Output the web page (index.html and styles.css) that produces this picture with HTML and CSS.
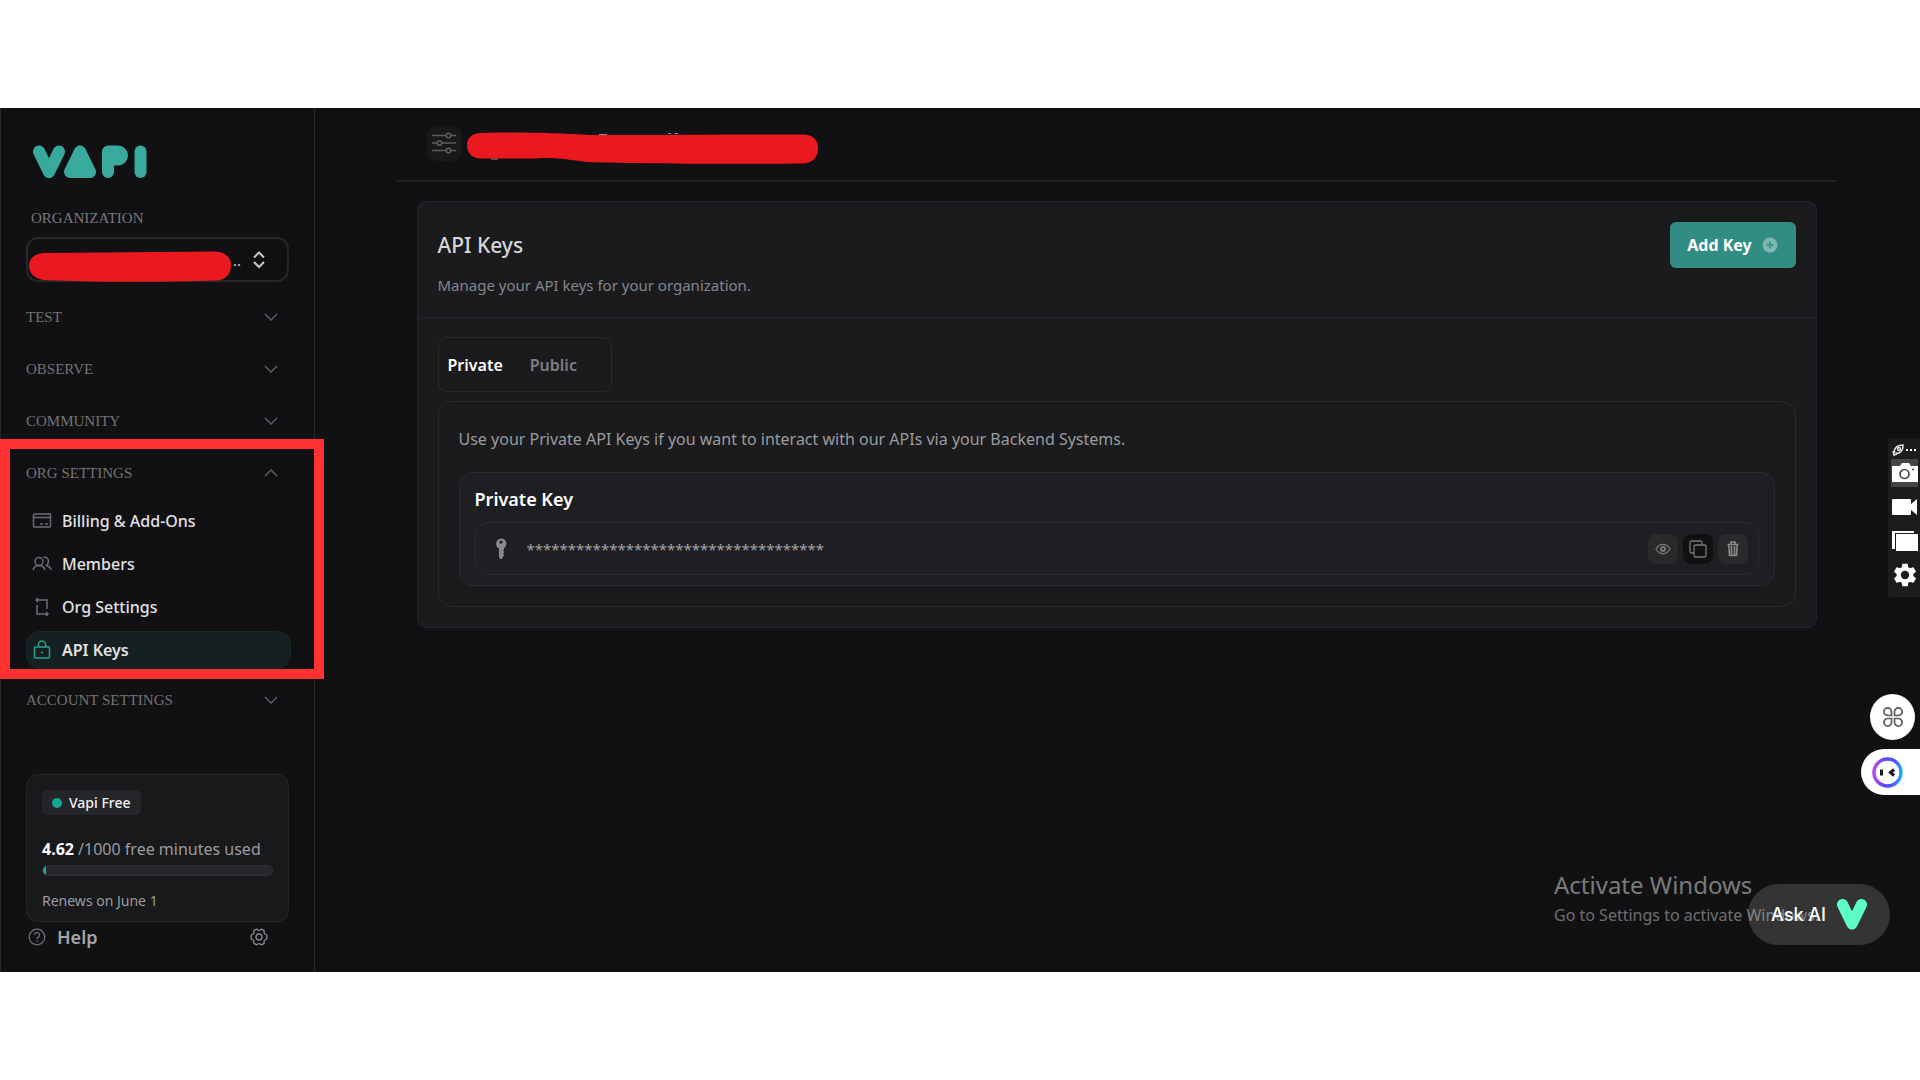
FILE: index.html
```html
<!DOCTYPE html>
<html lang="en">
<head>
<meta charset="utf-8">
<title>API Keys - Vapi</title>
<link rel="stylesheet" href="styles.css">
</head>
<body>
<div class="app">
  <aside class="sidebar">
    <a class="logo" href="#" aria-label="Vapi">
      <svg width="114" height="34" viewBox="0 0 114 34" fill="none" stroke="#38aa9d" stroke-width="12" stroke-linecap="round" stroke-linejoin="round">
        <path d="M6 6.500L16 27L26 6.500"/>
        <path d="M47 6.500L57 27H37Z" fill="#38aa9d"/>
        <path d="M75 0.500h10a10 10 0 0 1 0 20h-4v6.500a6 6 0 0 1-12 0V6.500a6 6 0 0 1 6-6Z" fill="#38aa9d" stroke="none"/>
        <path d="M107.500 6.500V27"/>
      </svg>
    </a>
    <label class="org-label" for="org">ORGANIZATION</label>
    <div class="org-select">
      <select id="org"><option>..</option></select>
      <svg class="org-chevrons" width="12" height="18" viewBox="0 0 12 18" fill="none" stroke="#c9c9cc" stroke-width="2"><path d="M1 6.500L6 1.500L11 6.500M1 11L6 16L11 11"/></svg>
      <svg class="org-redaction" width="203" height="32" viewBox="0 0 203 32"><path d="M14 2L187 0.500C197 1 203 8 202 16C201 24 196 29 188 29.500C130 31 70 31.500 14 29C5 27 0 22 0 15C0 8 5 3 14 2Z" fill="#ea191f"/></svg>
    </div>
    <nav class="nav">
      <button class="section" type="button">TEST<svg class="chev" viewBox="0 0 14 8"><path d="M1 1l6 6 6-6"/></svg></button>
      <button class="section" type="button">OBSERVE<svg class="chev" viewBox="0 0 14 8"><path d="M1 1l6 6 6-6"/></svg></button>
      <button class="section" type="button">COMMUNITY<svg class="chev" viewBox="0 0 14 8"><path d="M1 1l6 6 6-6"/></svg></button>
      <button class="section" type="button" aria-expanded="true">ORG SETTINGS<svg class="chev" viewBox="0 0 14 8"><path d="M1 7l6-6 6 6"/></svg></button>
      <ul class="items">
        <li><a class="item" href="#"><svg class="item-icon" viewBox="0 0 20 20"><rect x="1.500" y="3" width="17" height="13" rx="1"/><path d="M1.500 6.500h17M8 13h3M13 13h3"/></svg>Billing &amp; Add-Ons</a></li>
        <li><a class="item" href="#"><svg class="item-icon" viewBox="0 0 20 20"><circle cx="7" cy="7.500" r="4"/><path d="M1 16c1-3 3.500-4.500 6-4.500s5 1.500 6 4.500M11.500 3.500c3-1 5 1 5 4 0 1.500-1 3-2 4 2 .500 4 2 5 4.500"/></svg>Members</a></li>
        <li><a class="item" href="#"><svg class="item-icon" viewBox="0 0 20 20"><path d="M4 3h11v9M6 1L4 3l2 2M16 17H5V8M14 15l2 2-2 2"/></svg>Org Settings</a></li>
        <li><a class="item active" href="#"><svg class="item-icon" viewBox="0 0 20 20"><rect x="2.500" y="7" width="15" height="11" rx="1"/><path d="M6.500 7V4.500a3.500 3.500 0 0 1 7 0V7M9 12.500h2"/></svg>API Keys</a></li>
      </ul>
      <button class="section" type="button">ACCOUNT SETTINGS<svg class="chev" viewBox="0 0 14 8"><path d="M1 1l6 6 6-6"/></svg></button>
    </nav>
    <section class="plan">
      <span class="plan-badge"><i class="dot"></i>Vapi Free</span>
      <p class="usage"><strong>4.62</strong> /1000 free minutes used</p>
      <div class="meter" role="progressbar" aria-label="Free minutes" aria-valuenow="4.62" aria-valuemax="1000"><i class="meter-fill"></i></div>
      <p class="renews">Renews on June 1</p>
    </section>
    <footer class="help-row">
      <a class="help" href="#"><svg width="18" height="18" viewBox="0 0 18 18" fill="none" stroke="#6c6e74" stroke-width="1.300"><circle cx="9" cy="9" r="7.800"/><path d="M6.500 7a2.500 2.500 0 1 1 3.800 2.100c-.9.500-1.300.9-1.300 1.900M9 12.300v1.500"/></svg>Help</a>
      <button class="gear" type="button" aria-label="Settings"><svg width="18" height="18" viewBox="0 0 18 18" fill="none" stroke="#85878c" stroke-width="1.400"><circle cx="9" cy="9" r="3"/><path d="M6.500 1.200L9 2.500l2.500-1.300 2.600 1.500.1 2.800L16.800 7v4l-2.600 1.500-.1 2.800-2.600 1.500L9 15.500l-2.500 1.300-2.600-1.500-.1-2.800L1.200 11V7l2.600-1.500.1-2.800Z" stroke-linejoin="round"/></svg></button>
    </footer>
  </aside>

  <main class="main">
    <div class="content">
      <header class="topbar">
        <button class="menu-btn" type="button" aria-label="Menu"><svg width="26" height="22" viewBox="0 0 26 22" fill="none" stroke="#5b5c5e" stroke-width="1.600"><path d="M1 3.500h14M20 3.500h5M1 11h5M11 11h14M1 18.500h14M20 18.500h5"/><circle cx="17.500" cy="3.500" r="2.300"/><circle cx="8.500" cy="11" r="2.300"/><circle cx="17.500" cy="18.500" r="2.300"/></svg></button>
        <svg class="title-redaction" width="352" height="33" viewBox="0 0 352 33"><path d="M132 2.500h8M201 1.500h3M208 1.500h3M24 27h7" stroke="#8e8e90" stroke-width="1"/><path d="M14 1C50 0 90 1 122 3C190 3.500 250 2 337 2.500C347 3 351 9 351 16C351 25 346 31 336 31.500C270 32 180 32 120 30C100 28 90 25 70 26.500L13 26.500C4 26 0 20 0 13C0 6 5 1 14 1Z" fill="#ea191f"/></svg>
      </header>
      <section class="card">
        <div class="card-head">
          <div>
            <h1>API Keys</h1>
            <p class="sub">Manage your API keys for your organization.</p>
          </div>
          <button class="add" type="button">Add Key<svg width="16" height="16" viewBox="0 0 16 16"><circle cx="8" cy="8" r="7.500" fill="#80b7af"/><path d="M8 4.500v7M4.500 8h7" stroke="#318d83" stroke-width="1.400"/></svg></button>
        </div>
        <div class="card-body">
          <div class="tabs" role="tablist">
            <button class="tab selected" role="tab" aria-selected="true" type="button">Private</button>
            <button class="tab" role="tab" aria-selected="false" type="button">Public</button>
          </div>
          <div class="panel" role="tabpanel">
            <p class="intro">Use your Private API Keys if you want to interact with our APIs via your Backend Systems.</p>
            <div class="key-box">
              <label class="key-title" for="key">Private Key</label>
              <div class="key-row">
                <svg class="key-icon" width="12" height="22" viewBox="0 0 12 22"><path fill-rule="evenodd" d="M6 0.500a5.300 5.300 0 0 1 3 9.700v1.300l-1 1 1 1.200v1l-1 1 1 1.300v1L8 18v1.500L6 21.500 4 19.500V10.500A5.300 5.300 0 0 1 6 .5ZM6 2.500a1.600 1.600 0 1 0 0 3.200 1.600 1.600 0 0 0 0-3.200Z" fill="#88898b"/></svg>
                <input class="key-value" id="key" type="text" readonly value="************************************">
                <button class="act" type="button" aria-label="Show"><svg width="16" height="12" viewBox="0 0 16 12" fill="none" stroke="#77787a" stroke-width="1.300"><path d="M1 6C4.500-.3 11.500-.3 15 6 11.500 12.300 4.500 12.300 1 6Z"/><circle cx="8" cy="6" r="2" stroke-width="2"/></svg></button>
                <button class="act dark" type="button" aria-label="Copy"><svg width="18" height="18" viewBox="0 0 18 18" fill="none" stroke="#77787a" stroke-width="1.300"><rect x="5" y="5" width="12" height="12" rx="1.500"/><path d="M5 13H2.500A1.500 1.500 0 0 1 1 11.500v-9A1.500 1.500 0 0 1 2.500 1h9A1.500 1.500 0 0 1 13 2.500V5"/></svg></button>
                <button class="act" type="button" aria-label="Delete"><svg width="12" height="16" viewBox="0 0 12 16" fill="none" stroke="#898a8c" stroke-width="1.600"><path d="M.5 3.500h11M4 3V1h4v2M1.800 3.500l.7 11h7l.7-11M4.500 5v9M7.500 5v9"/></svg></button>
              </div>
            </div>
          </div>
        </div>
      </section>
    </div>
  </main>

  <div class="highlight"></div>

  <div class="capture">
    <div class="capture-top">
      <svg width="12" height="12" viewBox="0 0 12 12" fill="none" stroke="#e8e8e8" stroke-width="1.500"><path d="M3 9C1 5 5 1 11 1c.5 5-3 9-7 8M1 7l1 4 3-1"/><circle cx="7" cy="5" r="1.500"/></svg>
      <svg width="12" height="4" viewBox="0 0 12 4" fill="#fff"><path d="M1 1h2v2H1zM5 1h2v2H5zM9 1h2v2H9z"/></svg>
    </div>
    <button class="cap on" type="button" aria-label="Screenshot"><svg width="26" height="20" viewBox="0 0 26 20"><path d="M0 3h8l2-3h7l2 3h7v16H0Z" fill="#fff"/><circle cx="12.500" cy="11" r="4.500" fill="none" stroke="#454545" stroke-width="1.700"/><circle cx="21" cy="6.500" r="1" fill="#454545"/></svg></button>
    <button class="cap" type="button" aria-label="Record"><svg width="26" height="18" viewBox="0 0 26 18"><path d="M1 1h17q1 0 1 1v4l6-5v16l-6-5v4q0 1-1 1H1q-1 0-1-1V2q0-1 1-1Z" fill="#fff"/></svg></button>
    <button class="cap" type="button" aria-label="Gallery"><svg width="26" height="22" viewBox="0 0 26 22" fill="#fff"><path d="M0 1h22v2H3v16H0Z"/><path d="M4 4h22v17H4Z"/></svg></button>
    <button class="cap" type="button" aria-label="Options"><svg width="28" height="28" viewBox="0 0 24 24"><path fill="#fff" d="M19.140 12.940c.04-.3.060-.61.060-.94 0-.32-.02-.64-.07-.94l2.030-1.580a.5.500 0 0 0 .12-.61l-1.920-3.320a.5.500 0 0 0-.59-.22l-2.390.96a7 7 0 0 0-1.620-.94l-.36-2.540A.5.500 0 0 0 13.920 2.400h-3.840a.5.500 0 0 0-.47.410l-.36 2.540c-.59.240-1.130.57-1.620.94l-2.390-.96a.5.500 0 0 0-.59.220L2.740 8.870a.5.500 0 0 0 .12.610l2.030 1.580a6 6 0 0 0 0 1.880l-2.030 1.580a.5.500 0 0 0-.12.610l1.920 3.320c.12.220.37.290.59.220l2.390-.96c.5.380 1.030.7 1.620.94l.36 2.540c.05.240.24.410.48.410h3.840c.24 0 .44-.17.470-.41l.36-2.540a7 7 0 0 0 1.620-.94l2.390.96c.22.080.47 0 .59-.22l1.920-3.320a.5.500 0 0 0-.12-.61ZM12 15.600a3.600 3.600 0 1 1 0-7.200 3.600 3.600 0 0 1 0 7.200Z"/></svg></button>
  </div>

  <button class="apps" type="button" aria-label="Apps"><svg width="20" height="20" viewBox="0 0 20 20" fill="none" stroke="#5b5b60" stroke-width="1.700"><path d="M8.500 8.500H4.800a3.800 3.800 0 1 1 3.700-3.700ZM11.500 8.500h3.700a3.800 3.800 0 1 0-3.700-3.700ZM8.500 11.500H4.800a3.800 3.800 0 1 0 3.700 3.700ZM11.500 11.500h3.700a3.800 3.800 0 1 1-3.700 3.700Z"/></svg></button>
  <button class="bot" type="button" aria-label="Assistant"><svg width="31" height="31" viewBox="0 0 31 31"><defs><linearGradient id="ring" x1="0" y1=".7" x2="1" y2=".8"><stop offset="0" stop-color="#b34be8"/><stop offset=".4" stop-color="#5848ff"/><stop offset=".75" stop-color="#4a5cff"/><stop offset="1" stop-color="#20b4ee"/></linearGradient></defs><circle cx="15.500" cy="15.500" r="13.500" fill="#fff" stroke="url(#ring)" stroke-width="3.500"/><path d="M9.500 12.500v6M22 12.500L18.500 15.500l3.500 3" fill="none" stroke="#1a1a1a" stroke-width="3"/></svg></button>

  <button class="ask" type="button">Ask AI<svg width="30" height="31" viewBox="0 0 30 31"><path d="M5.500 5.500L15 25L24.500 5.500" fill="none" stroke="#5dfeca" stroke-width="11" stroke-linecap="round" stroke-linejoin="round"/></svg></button>

  <div class="watermark">
    <p class="wm-title">Activate Windows</p>
    <p class="wm-text">Go to Settings to activate Windows.</p>
  </div>
</div>
</body>
</html>
```

FILE: styles.css
```css
* { box-sizing: border-box; }

body {
  margin: 0;
  padding: 10vh 0;
  background: #fff;
  font-family: "Noto Sans", "Open Sans", sans-serif;
}

h1, p, ul { margin: 0; padding: 0; }
ul { list-style: none; }
a { color: inherit; text-decoration: none; }
svg { display: block; flex: none; }

button, input, select {
  margin: 0;
  padding: 0;
  border: 0;
  background: none;
  color: inherit;
  font: inherit;
}

.app {
  position: relative;
  display: flex;
  min-height: 80vh;
  background: #111113;
}

/* Sidebar */
.sidebar {
  width: 315px;
  flex: none;
  padding: 37px 25px 0;
  border: solid #2a2a2d;
  border-width: 0 1px;
}

.logo { display: block; padding-left: 7px; }

.org-label {
  display: block;
  margin: 29px 0 9px;
  padding-left: 5px;
  font: 15px/20px "Liberation Serif", serif;
  color: #77787c;
}

.org-select { position: relative; height: 45px; }

.org-select select {
  appearance: none;
  width: 100%;
  height: 100%;
  padding-left: 205px;
  border: 2px solid #28282b;
  border-radius: 12px;
  color: #d0d0d0;
  font-size: 15px;
}

.org-chevrons { position: absolute; right: 24px; top: 14px; }
.org-redaction { position: absolute; left: 3px; top: 14px; }

.nav { margin-top: 9px; }

.section {
  display: flex;
  align-items: center;
  justify-content: space-between;
  width: 100%;
  height: 52px;
  padding-right: 11px;
  font: 15px/20px "Liberation Serif", serif;
  color: #737376;
}

.chev {
  width: 14px;
  height: 8px;
  fill: none;
  stroke: #5b5c64;
  stroke-width: 1.500;
}

.items {
  display: flex;
  flex-direction: column;
  gap: 5px;
  margin: 3px -2px 5px 0;
}

.item {
  display: flex;
  align-items: center;
  gap: 10px;
  height: 38px;
  padding-left: 5px;
  border: 1px solid transparent;
  border-radius: 14px;
  font-size: 16px;
  font-weight: 500;
  color: #e2e2e3;
}

.item-icon {
  width: 20px;
  height: 20px;
  fill: none;
  stroke: #6d6e75;
  stroke-width: 1.500;
}

.item.active {
  background: #172020;
  border-color: #182927;
  font-weight: 600;
}

.active .item-icon { stroke: #2b9d8f; }

.plan {
  height: 148px;
  margin-top: 48px;
  padding: 15px;
  border: 1px solid #26292b;
  border-radius: 12px;
  background: #18191b;
  color: #9b9ca0;
}

.plan-badge {
  display: flex;
  align-items: center;
  gap: 7px;
  width: max-content;
  height: 25px;
  padding: 0 10px;
  border-radius: 5px;
  background: #242528;
  color: #f2f2f2;
  font-size: 14px;
  font-weight: 500;
}

.dot { width: 10px; height: 10px; border-radius: 50%; background: #14a795; }

.usage { margin-top: 22px; font-size: 16px; line-height: 24px; white-space: nowrap; }
.usage strong { color: #fff; font-weight: 700; }

.meter {
  width: 231px;
  height: 11px;
  margin-top: 4px;
  border: 1px solid #2f3033;
  border-radius: 6px;
  background: #26272a;
  overflow: hidden;
}

.meter-fill { display: block; width: 3px; height: 100%; background: #14a795; }

.renews { margin-top: 15px; font-size: 14px; line-height: 20px; }

.help-row {
  display: flex;
  align-items: center;
  justify-content: space-between;
  height: 30px;
  padding: 0 21px 0 2px;
}

.help {
  display: flex;
  align-items: center;
  gap: 11px;
  font-size: 18px;
  font-weight: 600;
  color: #a3a5a9;
}

/* Main column */
.main { flex: 1; min-width: 0; padding-right: 2px; }

.content { max-width: 1440px; margin: 0 auto; }

.topbar {
  display: flex;
  align-items: center;
  gap: 5px;
  height: 74px;
  padding: 0 30px 2px;
  border-bottom: 2px solid #212123;
}

.menu-btn {
  display: grid;
  place-items: center;
  width: 35px;
  height: 35px;
  border-radius: 9px;
  background: #19191b;
}

.title-redaction { margin-top: 10px; }

.card {
  margin: 19px 20px 0;
  border: 1px solid #1e2631;
  border-radius: 9px;
  background: #1b1b1d;
}

.card-head {
  display: flex;
  align-items: flex-start;
  justify-content: space-between;
  height: 117px;
  padding: 20px;
  border-bottom: 2px solid #1d222a;
}

h1 {
  margin-top: 8px;
  font-size: 21px;
  line-height: 30px;
  font-weight: 500;
  color: #d5d6d9;
}

.sub { margin-top: 14px; font-size: 15px; line-height: 22px; color: #82878f; }

.add {
  display: flex;
  align-items: center;
  justify-content: center;
  gap: 10px;
  width: 126px;
  height: 46px;
  border-radius: 6px;
  background: #318d83;
  color: #fff;
  font-size: 16px;
  font-weight: 700;
}

.card-body { padding: 18px 20px 20px; }

.tabs {
  display: flex;
  align-items: center;
  gap: 27px;
  width: 174px;
  height: 55px;
  padding-left: 9px;
  border: 1px solid #2a2a2c;
  border-radius: 9px;
}

.tab { font-size: 16px; font-weight: 600; color: #7d7d7f; }
.tab.selected { color: #fff; }

.panel {
  margin-top: 9px;
  padding: 24px 20px 20px;
  border: 1px solid #2a2a2c;
  border-radius: 14px;
}

.intro { font-size: 16px; line-height: 26px; color: #9a9b9e; }

.key-box {
  margin-top: 20px;
  padding: 13px 15px 10px;
  border: 1px solid #2a2b2e;
  border-radius: 14px;
  background: #1e1f22;
}

.key-title { display: block; font-size: 18px; line-height: 26px; font-weight: 600; color: #fff; }

.key-row {
  display: flex;
  align-items: center;
  gap: 5px;
  height: 53px;
  margin-top: 10px;
  padding: 0 10px 0 19px;
  border: 1px solid #2a2b2e;
  border-radius: 14px;
}

.key-value {
  flex: 1;
  min-width: 0;
  height: 30px;
  padding-left: 15px;
  font-size: 15px;
  color: #a3a3a5;
}

.act {
  display: grid;
  place-items: center;
  width: 30px;
  height: 30px;
  border-radius: 8px;
  background: #28292a;
}

.act.dark { background: #111112; }

/* Layers above the page */
.highlight {
  position: absolute;
  left: 0;
  top: 331px;
  width: 324px;
  height: 240px;
  border: 10px solid #ff3131;
  pointer-events: none;
}

.capture {
  position: absolute;
  right: 0;
  top: 330px;
  width: 32px;
  height: 159px;
  padding: 2px 2px 0 3px;
  border-radius: 4px 0 0 4px;
  background: #1c1c1d;
}

.capture-top { display: flex; align-items: center; justify-content: space-between; height: 19px; padding: 0 1px 0 1px; }

.cap { display: grid; place-items: center; width: 27px; height: 28px; margin-bottom: 6px; }
.cap.on { background: #454546; }

.apps {
  position: absolute;
  right: 5px;
  top: 586px;
  display: grid;
  place-items: center;
  width: 45px;
  height: 46px;
  border-radius: 50%;
  background: #fff;
}

.bot {
  position: absolute;
  right: 0;
  top: 641px;
  width: 59px;
  height: 46px;
  padding-left: 11px;
  border-radius: 23px 0 0 23px;
  background: #fff;
}

.ask {
  position: absolute;
  right: 30px;
  top: 776px;
  display: flex;
  align-items: center;
  gap: 11px;
  width: 142px;
  height: 61px;
  padding-left: 23px;
  border-radius: 31px;
  background: #343434;
  color: #fff;
  font: 500 18px/24px Inter, "Liberation Sans", sans-serif;
}

.watermark {
  position: absolute;
  right: 82px;
  top: 760px;
  width: 284px;
  color: rgba(255, 255, 255, 0.4);
  white-space: nowrap;
  pointer-events: none;
}

.wm-title { font-size: 24px; line-height: 34px; color: rgba(255, 255, 255, 0.46); }
.wm-text { font-size: 16px; line-height: 26px; }
```
